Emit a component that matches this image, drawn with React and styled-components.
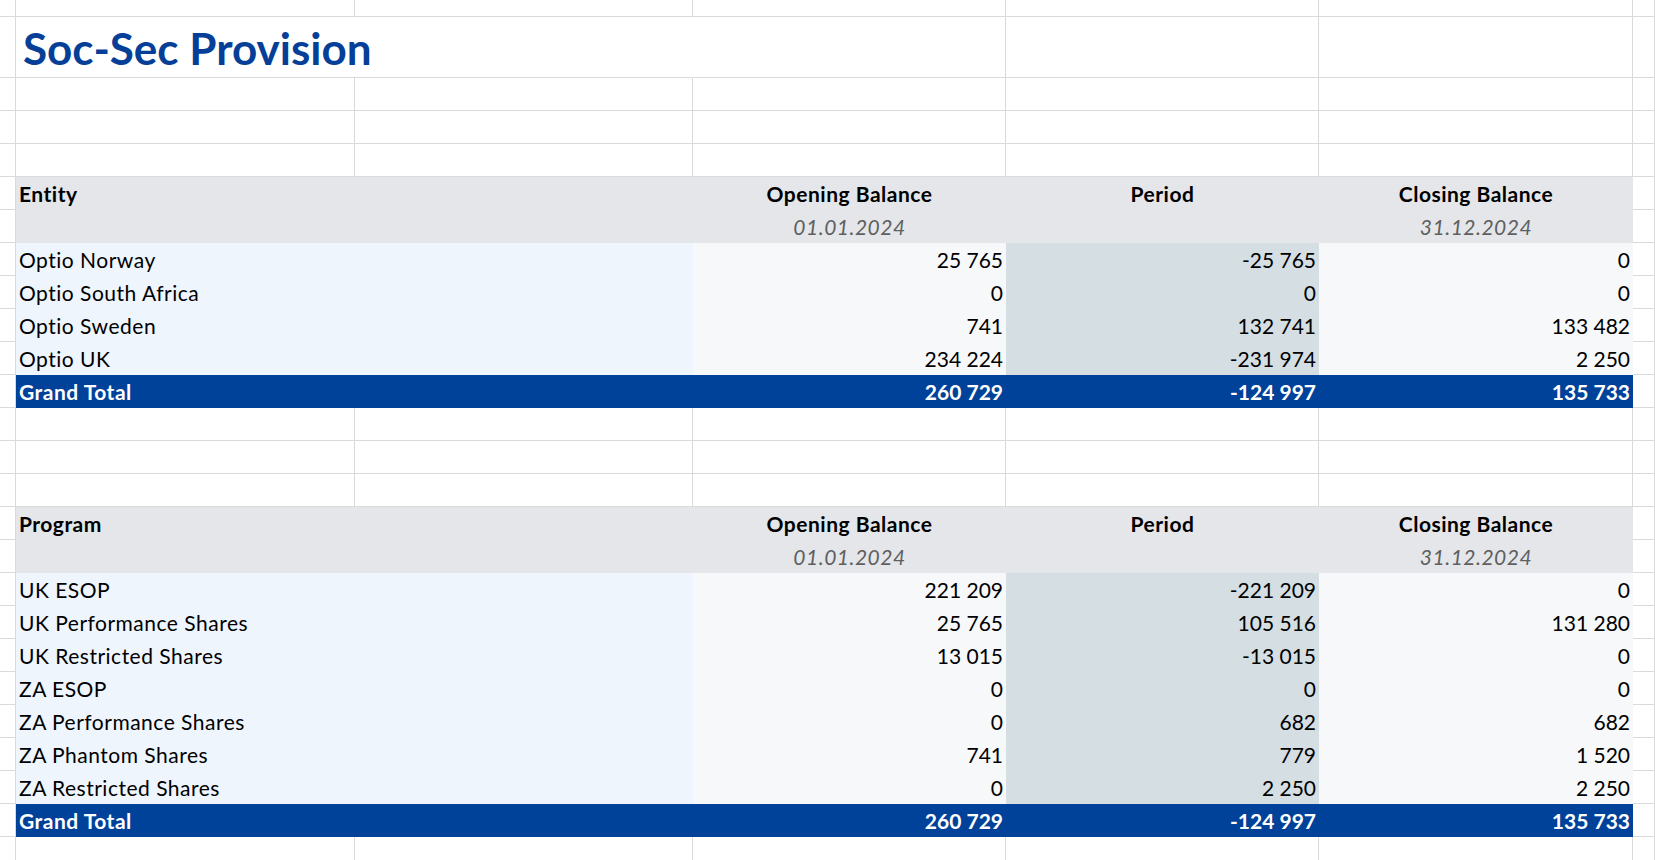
import React from "react";
import styled, { createGlobalStyle } from "styled-components";

// Data
const entities = [
  ["Optio Norway", "25 765", "-25 765", "0"],
  ["Optio South Africa", "0", "0", "0"],
  ["Optio Sweden", "741", "132 741", "133 482"],
  ["Optio UK", "234 224", "-231 974", "2 250"]
];

const programs = [
  ["UK ESOP", "221 209", "-221 209", "0"],
  ["UK Performance Shares", "25 765", "105 516", "131 280"],
  ["UK Restricted Shares", "13 015", "-13 015", "0"],
  ["ZA ESOP", "0", "0", "0"],
  ["ZA Performance Shares", "0", "682", "682"],
  ["ZA Phantom Shares", "741", "779", "1 520"],
  ["ZA Restricted Shares", "0", "2 250", "2 250"]
];

const totals = ["260 729", "-124 997", "135 733"];

// Colours
const GRID = "#dadada";
const HEAD = "#e4e6ea";
const LABEL = "#eef5fd";
const LIGHT = "#f7f8fa";
const PERIOD = "#d4dee3";
const BLUE = "#00419a";

// Styles
const GlobalStyle = createGlobalStyle`
  html, body {
    margin: 0;
    padding: 0;
    background: #ffffff;
    overflow: hidden;
  }
  body {
    font-family: Lato, "Liberation Sans", sans-serif;
    font-size: 21px;
    color: #000;
    font-variant-ligatures: none;
  }
`;

const Sheet = styled.div`
  width: 1655px;
  height: 860px;
  overflow: hidden;
  display: flex;
  flex-direction: column;
`;

const Row = styled.div`
  display: grid;
  grid-template-columns: 16px 339px 338px 313px 313px 314px 1fr;
  height: ${props => props.height || 33}px;
  flex: none;
`;

const Cell = styled.div`
  box-sizing: border-box;
  grid-column: span ${props => props.span || 1};
  background: ${props => props.fill || "transparent"};
  border-right: 1px solid ${props => (props.fill ? "transparent" : GRID)};
  border-bottom: 1px solid ${props => (props.fill ? "transparent" : GRID)};
  display: flex;
  align-items: flex-end;
  justify-content: ${props =>
    props.align === "right" ? "flex-end" : props.align === "center" ? "center" : "flex-start"};
  padding: 0 2px 3px 3px;
  line-height: 25px;
  white-space: nowrap;
  letter-spacing: ${props => (props.align === "right" ? "0" : "0.5px")};
  font-weight: ${props => (props.bold ? 700 : 400)};
  font-style: ${props => (props.italic ? "italic" : "normal")};
  color: ${props => props.color || "#000"};
`;

const Title = styled(Cell)`
  font-size: 44px;
  line-height: 53px;
  font-weight: 700;
  letter-spacing: 0;
  color: #063f97;
  padding: 0 0 2px 7px;
  border-right-color: transparent;
`;

const BlankRow = ({ height }) => (
  <Row height={height}>
    {Array.from({ length: 7 }).map((_, i) => (
      <Cell key={i} />
    ))}
  </Row>
);

const HeaderRows = ({ label }) => (
  <>
    <Row>
      <Cell />
      <Cell span={2} fill={HEAD} bold>{label}</Cell>
      <Cell fill={HEAD} bold align="center">Opening Balance</Cell>
      <Cell fill={HEAD} bold align="center">Period</Cell>
      <Cell fill={HEAD} bold align="center">Closing Balance</Cell>
      <Cell />
    </Row>
    <Row>
      <Cell />
      <Cell span={2} fill={HEAD} />
      <Cell fill={HEAD} italic align="center" color="#5f5f5f">01.01.2024</Cell>
      <Cell fill={HEAD} />
      <Cell fill={HEAD} italic align="center" color="#5f5f5f">31.12.2024</Cell>
      <Cell />
    </Row>
  </>
);

const DataRow = ({ row }) => (
  <Row>
    <Cell />
    <Cell span={2} fill={LABEL}>{row[0]}</Cell>
    <Cell fill={LIGHT} align="right">{row[1]}</Cell>
    <Cell fill={PERIOD} align="right">{row[2]}</Cell>
    <Cell fill={LIGHT} align="right">{row[3]}</Cell>
    <Cell />
  </Row>
);

const TotalRow = () => (
  <Row>
    <Cell />
    <Cell span={2} fill={BLUE} bold color="#fff">Grand Total</Cell>
    {totals.map(v => (
      <Cell key={v} fill={BLUE} bold color="#fff" align="right">{v}</Cell>
    ))}
    <Cell />
  </Row>
);

const PivotTable = ({ label, rows }) => (
  <>
    <HeaderRows label={label} />
    {rows.map(r => (
      <DataRow key={r[0]} row={r} />
    ))}
    <TotalRow />
  </>
);

const App = () => (
  <>
    <GlobalStyle />
    <Sheet>
      <BlankRow height={17} />
      <Row height={61}>
        <Cell />
        <Title span={2}>Soc-Sec Provision</Title>
        <Cell />
        <Cell />
        <Cell />
        <Cell />
      </Row>
      <BlankRow />
      <BlankRow />
      <BlankRow />
      <PivotTable label="Entity" rows={entities} />
      <BlankRow />
      <BlankRow />
      <BlankRow />
      <PivotTable label="Program" rows={programs} />
      <BlankRow />
    </Sheet>
  </>
);

export default App;
